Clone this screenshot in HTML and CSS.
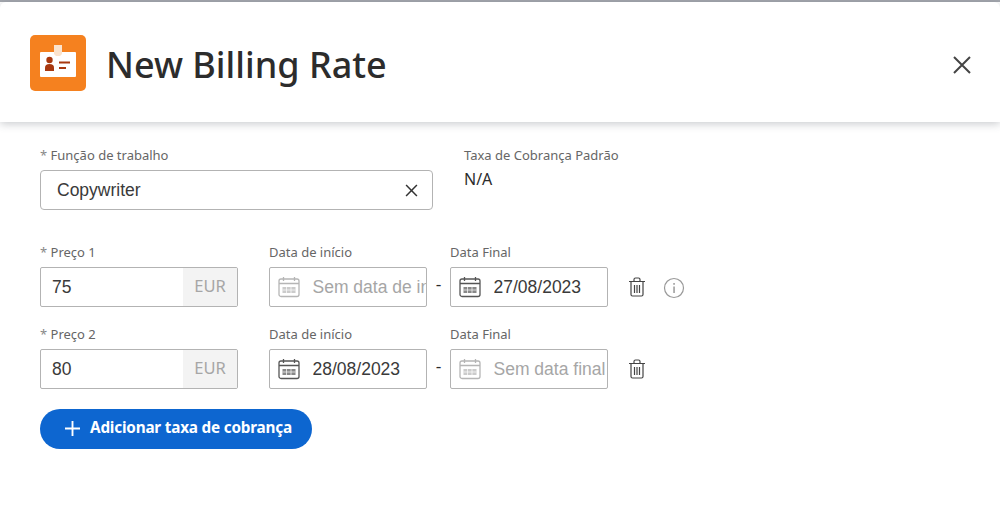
FILE: index.html
```html
<!DOCTYPE html>
<html lang="pt">
<head>
<meta charset="utf-8">
<title>New Billing Rate</title>
<link rel="stylesheet" href="styles.css">
</head>
<body>
<div class="dialog">
  <header class="header">
    <svg class="logo" viewBox="0 0 56 56" aria-hidden="true">
      <rect width="56" height="56" rx="5" fill="#f5811f"/>
      <rect x="10" y="17" width="36" height="25" rx="1" fill="#fff"/>
      <path d="M24 10h8v9l-2 2h-4l-2-2z" fill="#fbe3cd"/>
      <circle cx="19.500" cy="25" r="3.200" fill="#a8380f"/>
      <path d="M15 36v-3.500q0-3.500 4.500-3.500t4.500 3.500V36z" fill="#a8380f"/>
      <rect x="29" y="26.500" width="11" height="2" fill="#a8380f"/>
      <rect x="29" y="32" width="7" height="2" fill="#a8380f"/>
    </svg>
    <h1 class="title">New Billing Rate</h1>
    <svg class="close" viewBox="0 0 20 20" aria-hidden="true">
      <path d="M2 2l16 16M18 2L2 18" stroke="#444" stroke-width="2" fill="none"/>
    </svg>
  </header>
  <main class="form">
    <section class="top-row">
      <div class="field role">
        <div class="label"><span class="req">*</span> Função de trabalho</div>
        <div class="box role-box">
          <span class="value">Copywriter</span>
          <svg class="clear" viewBox="0 0 12 12" aria-hidden="true">
            <path d="M1 1l10 10M11 1L1 11" stroke="#333" stroke-width="1.400" fill="none"/>
          </svg>
        </div>
      </div>
      <div class="field default-rate">
        <div class="label">Taxa de Cobrança Padrão</div>
        <div class="na">N/A</div>
      </div>
    </section>

    <section class="rate-row first">
      <div class="field price">
        <div class="label"><span class="req">*</span> Preço 1</div>
        <div class="box price-box"><span class="value num">75</span><span class="cur">EUR</span></div>
      </div>
      <div class="field date">
        <div class="label">Data de início</div>
        <div class="box date-box muted">
          <svg class="cal" viewBox="0 0 22 22" aria-hidden="true"><use href="#cal"/></svg>
          <span class="value clip">Sem data de início</span>
        </div>
      </div>
      <span class="dash">-</span>
      <div class="field date">
        <div class="label">Data Final</div>
        <div class="box date-box">
          <svg class="cal" viewBox="0 0 22 22" aria-hidden="true"><use href="#cal"/></svg>
          <span class="value clip">27/08/2023</span>
        </div>
      </div>
      <svg class="trash" viewBox="0 0 18 20" aria-hidden="true"><use href="#trash"/></svg>
      <svg class="info" viewBox="0 0 22 22" aria-hidden="true">
        <circle cx="11" cy="11" r="9.500" fill="none" stroke="#999" stroke-width="1.200"/>
        <rect x="10.300" y="9.500" width="1.500" height="6.500" fill="#999"/>
        <rect x="10.300" y="6" width="1.500" height="1.800" fill="#999"/>
      </svg>
    </section>

    <section class="rate-row second">
      <div class="field price">
        <div class="label"><span class="req">*</span> Preço 2</div>
        <div class="box price-box"><span class="value num">80</span><span class="cur">EUR</span></div>
      </div>
      <div class="field date">
        <div class="label">Data de início</div>
        <div class="box date-box">
          <svg class="cal" viewBox="0 0 22 22" aria-hidden="true"><use href="#cal"/></svg>
          <span class="value clip">28/08/2023</span>
        </div>
      </div>
      <span class="dash">-</span>
      <div class="field date">
        <div class="label">Data Final</div>
        <div class="box date-box muted">
          <svg class="cal" viewBox="0 0 22 22" aria-hidden="true"><use href="#cal"/></svg>
          <span class="value clip">Sem data final</span>
        </div>
      </div>
      <svg class="trash" viewBox="0 0 18 20" aria-hidden="true"><use href="#trash"/></svg>
    </section>

    <button class="add" type="button">
      <svg class="plus" viewBox="0 0 16 16" aria-hidden="true"><path d="M8 0v16M0 8h16" stroke="#fff" stroke-width="2" fill="none"/></svg>
      Adicionar taxa de cobrança
    </button>
  </main>
</div>
<svg class="defs" aria-hidden="true">
  <defs>
    <g id="cal" fill="none" stroke="currentColor">
      <rect x="1" y="3" width="20" height="17.500" rx="2" stroke-width="1.300"/>
      <path d="M1 7.500h20M5.500 1v4M16.500 1v4" stroke-width="1.300"/>
      <rect x="4.500" y="11" width="13" height="6" fill="currentColor" stroke="none" opacity=".7"/>
      <path d="M8.500 11v6M13 11v6M4.500 14h13" stroke="#fff" stroke-width=".7"/>
    </g>
    <g id="trash" fill="none" stroke="#444" stroke-width="1.200">
      <path d="M1 4.500h16M6 4.500V2.500q0-1.500 1.500-1.500h3q1.500 0 1.500 1.500v2"/>
      <path d="M3 4.500v13q0 1.500 1.500 1.500h9q1.500 0 1.500-1.500v-13"/>
      <path d="M6.500 8v8M9 8v8M11.500 8v8"/>
    </g>
  </defs>
</svg>
</body>
</html>
```
FILE: styles.css
```css
* { box-sizing: border-box; }
html, body { margin: 0; height: 100%; }
body {
  background: #fff;
  font-family: "Liberation Sans", Arial, sans-serif;
  color: #2c2c2c;
  overflow: hidden;
}
.dialog { width: 1000px; height: 530px; border-top: 2px solid #a3a6ad; }
.header {
  height: 120px;
  display: flex;
  align-items: center;
  padding: 0 28px 0 30px;
  background: #fff;
  box-shadow: 0 2px 8px rgba(60, 70, 80, .28);
  border-radius: 6px 6px 0 0;
}
.logo { width: 56px; height: 56px; flex: none; margin-top: 2px; }
.title {
  flex: 1;
  margin: 5px 0 0 20px;
  font-family: "Noto Sans", sans-serif;
  font-weight: 500;
  font-size: 36px;
  line-height: 46px;
  color: #2c2c2c;
}
.close { width: 20px; height: 20px; flex: none; margin-top: 5px; }
.form { padding: 24px 0 0 40px; }
.label {
  font-family: "Noto Sans", sans-serif;
  font-size: 13px;
  line-height: 18px;
  color: #666;
}
.req { color: #888; }
.box {
  display: flex;
  align-items: center;
  height: 40px;
  border: 1px solid #b3b3b3;
  border-radius: 3px;
  background: #fff;
  margin-top: 6px;
}
.value { font-size: 17.500px; color: #3a3a3a; white-space: nowrap; }
.top-row { display: flex; gap: 31px; }
.role { width: 393px; }
.role-box { padding: 0 14px 0 16px; justify-content: space-between; border-radius: 4px; }
.clear { width: 13px; height: 13px; }
.na { font-family: "Noto Sans", sans-serif; font-size: 16px; line-height: 20px; color: #2c2c2c; margin-top: 5px; }
.rate-row { display: flex; align-items: flex-end; }
.first { margin-top: 33px; }
.second { margin-top: 18px; }
.price { width: 198px; margin-right: 31px; }
.price-box { border-radius: 2px; overflow: hidden; }
.num { flex: 1; padding-left: 11px; }
.cur {
  width: 54px;
  align-self: stretch;
  display: flex;
  align-items: center;
  justify-content: center;
  padding-bottom: 3px;
  background: #f3f3f3;
  color: #a6a6a6;
  font-family: "Noto Sans", sans-serif;
  font-size: 16.500px;
}
.date { width: 158px; }
.date-box { padding-left: 8px; gap: 12.500px; overflow: hidden; border-radius: 2px; color: #555; }
.clip { overflow: hidden; flex: 1; }
.muted { color: #b5b5b5; }
.muted .value { color: #a6a6a6; }
.cal { width: 22px; height: 22px; flex: none; }
.dash { width: 23px; text-align: center; height: 40px; line-height: 36px; font-size: 17px; flex: none; }
.trash { width: 18px; height: 20px; flex: none; margin: 0 0 10px 20px; }
.info { width: 22px; height: 22px; flex: none; margin: 0 0 8px 17px; }
.add {
  display: flex;
  align-items: center;
  gap: 10px;
  height: 40px;
  margin-top: 20px;
  padding: 0 20px 4px 25px;
  border: 0;
  border-radius: 20px;
  background: #0d66d0;
  color: #fff;
  font-family: "Noto Sans", sans-serif;
  font-weight: 700;
  font-size: 15.300px;
  letter-spacing: -.2px;
  line-height: 20px;
}
.plus { width: 15px; height: 15px; flex: none; margin-top: 2px; }
.defs { position: absolute; width: 0; height: 0; }
```
